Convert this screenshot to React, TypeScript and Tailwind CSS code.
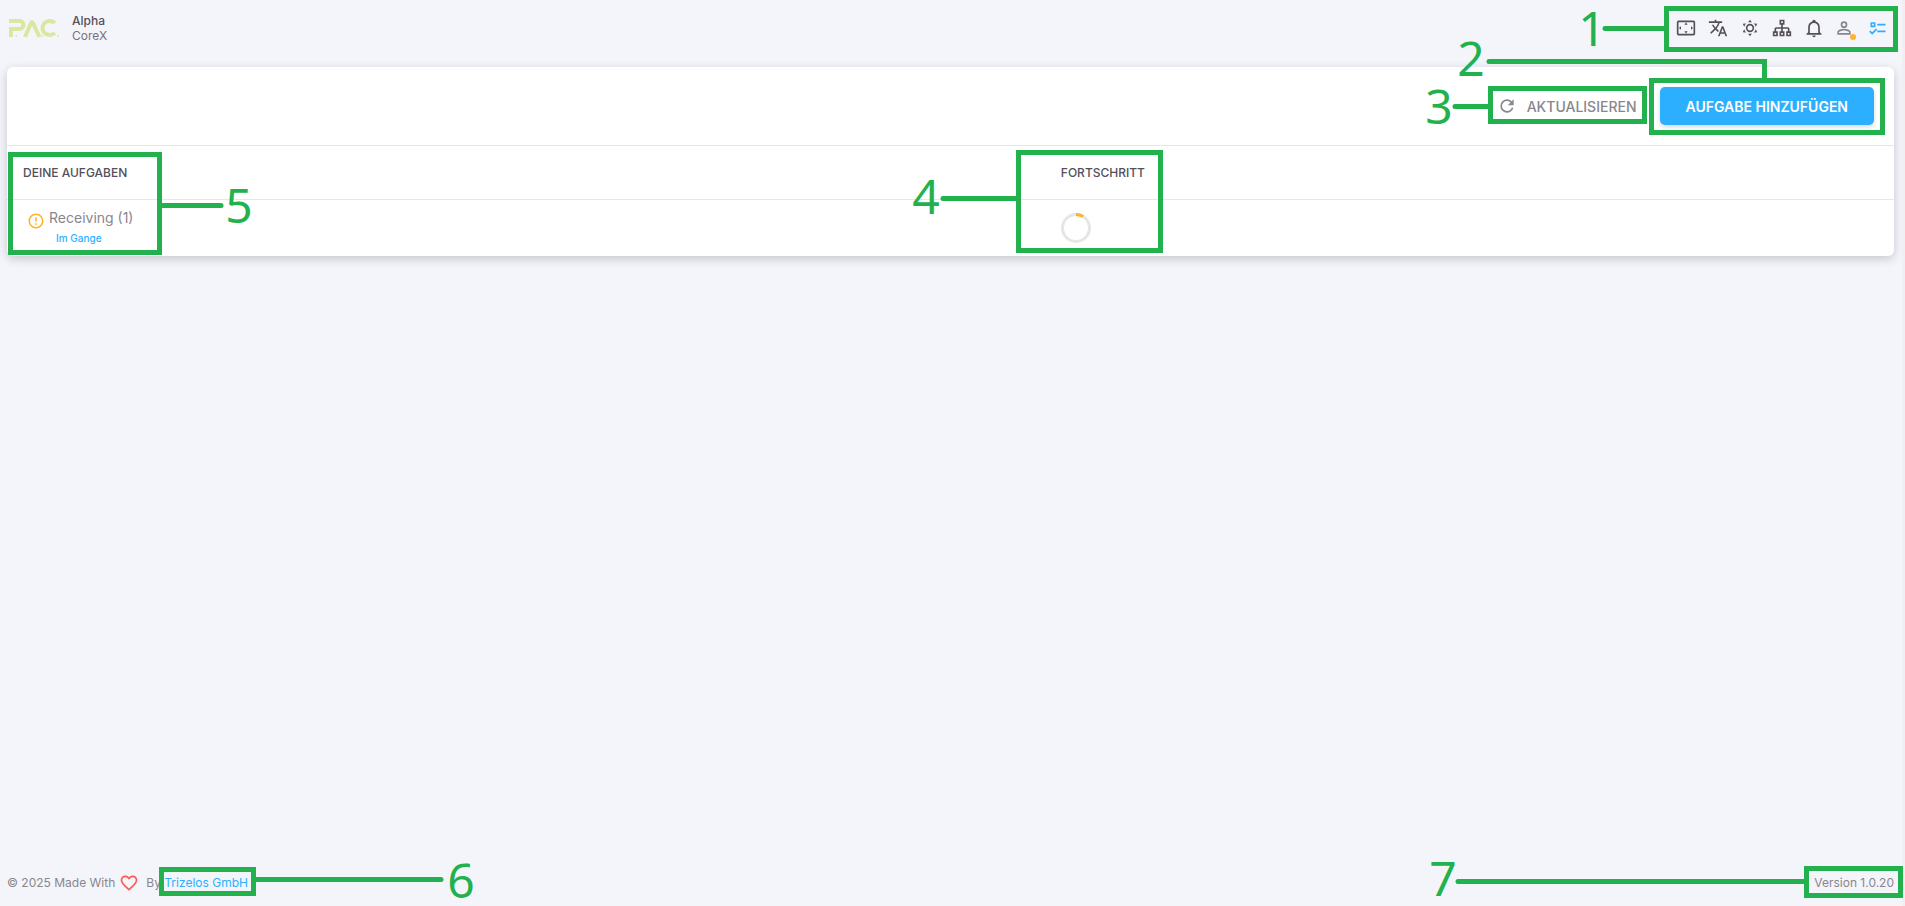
import type { ReactNode } from 'react'

const icons = {
  overscan:
    'M12,5.5L10,8H14L12,5.5M18,10V14L20.5,12L18,10M6,10L3.5,12L6,14V10M14,16H10L12,18.5L14,16M21,3H3A2,2 0 0,0 1,5V19A2,2 0 0,0 3,21H21A2,2 0 0,0 23,19V5A2,2 0 0,0 21,3M21,19H3V5H21V19Z',
  translate:
    'M12.87,15.07L10.33,12.56L10.36,12.53C12.1,10.59 13.34,8.36 14.07,6H17V4H10V2H8V4H1V6H12.17C11.5,7.92 10.44,9.75 9,11.35C8.07,10.32 7.3,9.19 6.69,8H4.69C5.42,9.63 6.42,11.17 7.67,12.56L2.58,17.58L4,19L9,14L12.11,17.11L12.87,15.07M18.5,10H16.5L12,22H14L15.12,19H19.87L21,22H23L18.5,10M15.88,17L17.5,12.67L19.12,17H15.88Z',
  sunny:
    'M12,7A5,5 0 0,1 17,12A5,5 0 0,1 12,17A5,5 0 0,1 7,12A5,5 0 0,1 12,7M12,9A3,3 0 0,0 9,12A3,3 0 0,0 12,15A3,3 0 0,0 15,12A3,3 0 0,0 12,9M12,2L14.39,5.42C13.65,5.15 12.84,5 12,5C11.16,5 10.35,5.15 9.61,5.42L12,2M3.34,7L7.5,6.65C6.9,7.16 6.36,7.78 5.94,8.5C5.5,9.24 5.25,10 5.11,10.79L3.34,7M3.36,17L5.12,13.23C5.26,14 5.53,14.78 5.95,15.5C6.37,16.24 6.91,16.86 7.5,17.37L3.36,17M20.65,7L18.88,10.79C18.74,10 18.47,9.23 18.05,8.5C17.63,7.78 17.1,7.15 16.5,6.64L20.65,7M20.64,17L16.5,17.36C17.09,16.85 17.62,16.22 18.04,15.5C18.46,14.77 18.73,14 18.87,13.21L20.64,17M12,22L9.59,18.56C10.33,18.83 11.14,19 12,19C12.82,19 13.63,18.83 14.37,18.56L12,22Z',
  sitemap:
    'M9,2V8H11V11H5C3.89,11 3,11.89 3,13V16H1V22H7V16H5V13H11V16H9V22H15V16H13V13H19V16H17V22H23V16H21V13C21,11.89 20.11,11 19,11H13V8H15V2H9M11,4H13V6H11V4M3,18H5V20H3V18M11,18H13V20H11V18M19,18H21V20H19V18Z',
  bell:
    'M10 21H14C14 22.1 13.1 23 12 23S10 22.1 10 21M21 19V20H3V19L5 17V11C5 7.9 7 5.2 10 4.3V4C10 2.9 10.9 2 12 2S14 2.9 14 4V4.3C17 5.2 19 7.9 19 11V17L21 19M17 11C17 8.2 14.8 6 12 6S7 8.2 7 11V18H17V11Z',
  account:
    'M12,4A4,4 0 0,1 16,8A4,4 0 0,1 12,12A4,4 0 0,1 8,8A4,4 0 0,1 12,4M12,6A2,2 0 0,0 10,8A2,2 0 0,0 12,10A2,2 0 0,0 14,8A2,2 0 0,0 12,6M12,13C14.67,13 20,14.33 20,17V20H4V17C4,14.33 9.33,13 12,13M12,14.9C9.03,14.9 5.9,16.36 5.9,17V18.1H18.1V17C18.1,16.36 14.97,14.9 12,14.9Z',
  checks:
    'M3,5H9V11H3V5M5,7V9H7V7H5M11,7H21V9H11V7M11,15H21V17H11V15M5,20L1.5,16.5L2.91,15.09L5,17.17L9.59,12.59L11,14L5,20Z',
  refresh:
    'M17.65,6.35C16.2,4.9 14.21,4 12,4A8,8 0 0,0 4,12A8,8 0 0,0 12,20C15.73,20 18.84,17.45 19.73,14H17.65C16.83,16.33 14.61,18 12,18A6,6 0 0,1 6,12A6,6 0 0,1 12,6C13.66,6 15.14,6.69 16.22,7.78L13,11H20V4L17.65,6.35Z',
  alert:
    'M11,15H13V17H11V15M11,7H13V13H11V7M12,2C6.47,2 2,6.5 2,12A10,10 0 0,0 12,22A10,10 0 0,0 22,12A10,10 0 0,0 12,2M12,20A8,8 0 0,1 4,12A8,8 0 0,1 12,4A8,8 0 0,1 20,12A8,8 0 0,1 12,20Z',
  heart:
    'M12.1,18.55L12,18.65L11.89,18.55C7.14,14.24 4,11.39 4,8.5C4,6.5 5.5,5 7.5,5C9.04,5 10.54,6 11.07,7.36H12.93C13.46,6 14.96,5 16.5,5C18.5,5 20,6.5 20,8.5C20,11.39 16.86,14.24 12.1,18.55M16.5,3C14.76,3 13.09,3.81 12,5.08C10.91,3.81 9.24,3 7.5,3C4.42,3 2,5.41 2,8.5C2,12.27 5.4,15.36 10.55,20.03L12,21.35L13.45,20.03C18.6,15.36 22,12.27 22,8.5C22,5.41 19.58,3 16.5,3Z',
}

const toolbar: { icon: keyof typeof icons; label: string; className: string; dot?: boolean }[] = [
  { icon: 'overscan', label: 'Vollbild', className: 'text-[#544f5a]' },
  { icon: 'translate', label: 'Sprache', className: 'text-[#544f5a]' },
  { icon: 'sunny', label: 'Design', className: 'text-[#544f5a]' },
  { icon: 'sitemap', label: 'Struktur', className: 'text-[#544f5a]' },
  { icon: 'bell', label: 'Benachrichtigungen', className: 'text-[#544f5a]' },
  { icon: 'account', label: 'Konto', className: 'mr-0.5 -ml-0.5 text-[#89868d]', dot: true },
  { icon: 'checks', label: 'Aufgaben', className: 'text-[#2caffe]' },
]

const tasks = [{ name: 'Receiving (1)', status: 'Im Gange', progress: 9 }]

function Icon({ name, className = 'size-5' }: { name: keyof typeof icons; className?: string }) {
  return (
    <svg viewBox="0 0 24 24" className={`shrink-0 ${className}`} fill="currentColor" fillRule="evenodd" aria-hidden="true">
      <path d={icons[name]} />
    </svg>
  )
}

function Logo() {
  return (
    <svg width="52" height="20" viewBox="0 0 52 20" fill="none" stroke="#d8e8a0" strokeWidth="4" role="img" aria-label="PAC">
      <path d="M2 3H12.5A3.6 3.6 0 0 1 12.5 11H4V19" />
      <path d="M18 19L24 5.2Q25 2.6 26 5.2L32.5 19" />
      <path d="M48 5Q45.6 3 42.5 3A7 7 0 0 0 42.5 17Q45.6 17 48 15" />
      <path d="M8.5 18H10M34.5 18H36M50 18H51.5" strokeWidth="1.5" />
    </svg>
  )
}

function Progress({ value }: { value: number }) {
  return (
    <svg viewBox="0 0 30 30" className="size-[30px] -rotate-90" fill="none" strokeWidth="3" role="img" aria-label={`${value}%`}>
      <circle cx="15" cy="15" r="13.5" stroke="#e6e6e6" />
      <circle cx="15" cy="15" r="13.5" stroke="#ffb22b" pathLength="100" strokeDasharray={`${value} 100`} />
    </svg>
  )
}

// green numbered markers drawn over the page
function Marks({ className, viewBox, children }: { className: string; viewBox: string; children: ReactNode }) {
  return (
    <svg
      viewBox={viewBox}
      className={`pointer-events-none absolute font-['Noto_Sans',sans-serif] text-[48px] ${className}`}
      fill="none"
      stroke="#22b14c"
      strokeWidth="5"
    >
      {children}
    </svg>
  )
}

function Digit({ x, y, children }: { x: number; y: number; children: string }) {
  return (
    <text x={x} y={y} textAnchor="middle" fill="#22b14c" stroke="none">
      {children}
    </text>
  )
}

export default function App() {
  return (
    <div className="relative flex min-h-screen flex-col border-r-[3px] border-[#f0f0f3] bg-[#f4f5fa] pr-2 pl-[7px] font-['Inter',sans-serif] text-[#544f5a]">
      <header className="flex h-14 items-center justify-between pr-[6px]">
        <div className="flex items-center gap-[13px]">
          <Logo />
          <div className="text-xs leading-[15px]">
            <p className="font-medium">Alpha</p>
            <p className="text-[#76727c]">CoreX</p>
          </div>
        </div>
        <nav className="flex items-center gap-3">
          {toolbar.map((item) => (
            <button key={item.icon} type="button" aria-label={item.label} className={`relative ${item.className}`}>
              <Icon name={item.icon} />
              {item.dot && <span className="absolute -right-0.5 -bottom-0.5 size-1.5 rounded-full bg-[#ffb22b]" />}
            </button>
          ))}
        </nav>
      </header>

      <main className="relative mt-[11px] rounded-md bg-white shadow-[0_3px_10px_rgba(58,53,65,0.24)]">
        <div className="flex items-center justify-end gap-[23px] border-b border-[#e7e7e9] p-5 text-sm">
          <button type="button" className="flex items-center gap-2.5 font-medium text-[#89868d]">
            <Icon name="refresh" />
            <span className="pt-0.5">AKTUALISIEREN</span>
          </button>
          <button
            type="button"
            className="h-[38px] rounded-[5px] bg-[#2caffe] px-[26px] pt-0.5 font-semibold text-white shadow-[0_2px_4px_rgba(58,53,65,0.2)]"
          >
            AUFGABE HINZUFÜGEN
          </button>
        </div>
        <table className="w-full table-fixed text-left">
          <thead>
            <tr className="h-[53px] border-b border-[#e7e7e9] text-xs">
              <th className="w-[55%] px-4 pt-0.5 font-medium">DEINE AUFGABEN</th>
              <th className="px-4 pt-0.5 font-medium">FORTSCHRITT</th>
            </tr>
          </thead>
          <tbody>
            {tasks.map((task) => (
              <tr key={task.name} className="h-[57px]">
                <td className="px-5">
                  <div className="flex items-start gap-1">
                    <Icon name="alert" className="mt-1 size-[18px] text-[#ffb22b]" />
                    <div>
                      <p className="text-sm leading-5 text-[#89868d]">{task.name}</p>
                      <p className="pl-[7px] text-[10px] leading-5 font-medium text-[#2caffe]">{task.status}</p>
                    </div>
                  </div>
                </td>
                <td className="px-4">
                  <Progress value={task.progress} />
                </td>
              </tr>
            ))}
          </tbody>
        </table>
        <Marks className="top-[73px] left-[calc(55%-140px)] h-[120px] w-[280px]" viewBox="905 140 280 120">
          <path d="M943 198.5H1016" strokeLinecap="round" />
          <rect x="1018.5" y="152.5" width="142" height="98" />
          <Digit x={926} y={214}>4</Digit>
        </Marks>
      </main>

      <footer className="mt-auto flex h-[46px] items-center justify-between text-xs text-[#89868d]">
        <p className="flex items-center">
          © 2025 Made With
          <Icon name="heart" className="mx-1 size-5 text-[#ff5b5c]" />
          <span className="ml-[3px]">
            By{' '}
            <a href="#" className="text-[#2caffe]">
              Trizelos GmbH
            </a>
          </span>
        </p>
        <p>Version 1.0.20</p>
      </footer>

      <Marks className="top-0 left-0 h-[260px] w-[300px]" viewBox="0 0 300 260">
        <path d="M162 205.5H221" strokeLinecap="round" />
        <rect x="10.5" y="154.5" width="149" height="98" />
        <Digit x={239} y={223}>5</Digit>
      </Marks>
      <Marks className="top-0 -right-[3px] h-[140px] w-[500px] overflow-visible" viewBox="1405 0 500 140">
        <path d="M1605 28.5H1664M1489 61.5H1764.5V78M1455 106.5H1488" strokeLinecap="round" />
        <rect x="1666.5" y="8.5" width="229" height="41" />
        <rect x="1651.5" y="80.5" width="231" height="52" />
        <rect x="1490.5" y="88.5" width="154" height="33" />
        <Digit x={1592} y={46}>1</Digit>
        <Digit x={1471} y={76}>2</Digit>
        <Digit x={1439} y={124}>3</Digit>
      </Marks>
      <Marks className="bottom-0 left-0 h-[56px] w-[500px]" viewBox="0 850 500 56">
        <path d="M256 879.5H441" strokeLinecap="round" />
        <rect x="161.5" y="869.5" width="92" height="24" />
        <Digit x={461} y={898}>6</Digit>
      </Marks>
      <Marks className="-right-[3px] bottom-0 h-[56px] w-[500px]" viewBox="1405 850 500 56">
        <path d="M1458 881.5H1804" strokeLinecap="round" />
        <rect x="1806.5" y="868.5" width="94" height="27" />
        <Digit x={1443} y={896}>7</Digit>
      </Marks>
    </div>
  )
}
